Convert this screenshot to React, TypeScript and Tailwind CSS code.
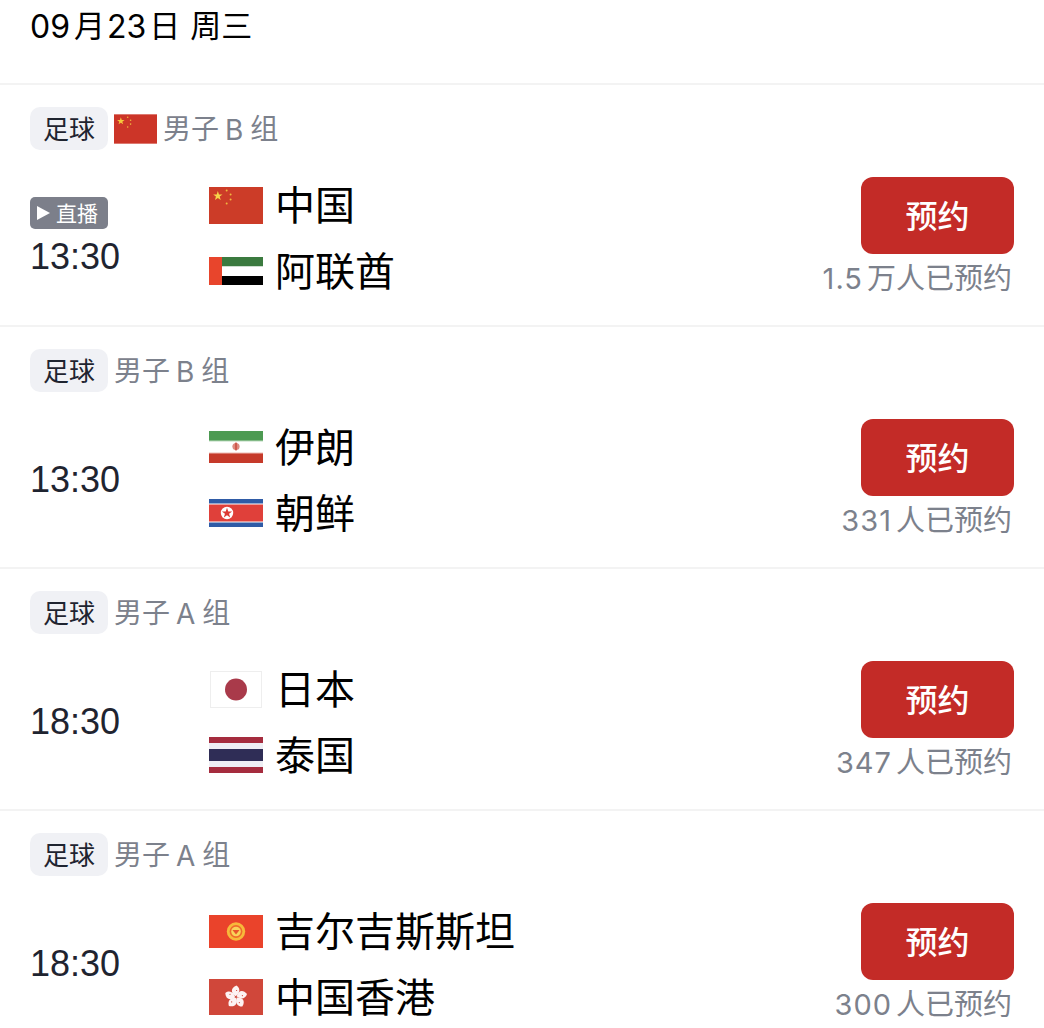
import React from "react"

type FlagProps = { className: string }

const star = "M0,-1 L0.235,-0.325 L0.951,-0.309 L0.38,0.124 L0.588,0.809 L0,0.4 L-0.588,0.809 L-0.38,0.124 L-0.951,-0.309 L-0.235,-0.325 Z"

const China = ({ className }: FlagProps) => (
  <svg viewBox="0 0 55 37" preserveAspectRatio="none" className={className}>
    <rect width="55" height="37" fill="#cc3c28" />
    <path d={star} transform="translate(9 9) scale(5)" fill="#f7d54a" />
    <circle cx="18" cy="3.5" r="1" fill="#f0b93e" />
    <circle cx="22" cy="7.5" r="1" fill="#f0b93e" />
    <circle cx="22" cy="12.5" r="1" fill="#f0b93e" />
    <circle cx="18" cy="16.5" r="1" fill="#f0b93e" />
  </svg>
)

const Uae = ({ className }: FlagProps) => (
  <svg viewBox="0 0 54 28" preserveAspectRatio="none" className={className}>
    <rect width="54" height="9.5" fill="#3b7a3f" />
    <rect y="9.5" width="54" height="9.5" fill="#ffffff" />
    <rect y="19" width="54" height="9" fill="#000000" />
    <rect width="13" height="28" fill="#e8452c" />
  </svg>
)

const Iran = ({ className }: FlagProps) => (
  <svg viewBox="0 0 54 32" preserveAspectRatio="none" className={className}>
    <rect width="54" height="10" fill="#4d9a52" />
    <rect y="10" width="54" height="12" fill="#ffffff" />
    <rect y="22" width="54" height="10" fill="#c63a2a" />
    <rect y="9.5" width="54" height="1" fill="#b9d9bb" />
    <rect y="21.5" width="54" height="1" fill="#eebbb4" />
    <circle cx="27" cy="15.5" r="3.6" fill="#dd8a80" />
    <rect x="26.4" y="11.5" width="1.2" height="8" fill="#c63a2a" />
  </svg>
)

const NorthKorea = ({ className }: FlagProps) => (
  <svg viewBox="0 0 54 28" preserveAspectRatio="none" className={className}>
    <rect width="54" height="28" fill="#2f5ba6" />
    <rect y="4.5" width="54" height="19" fill="#ffffff" />
    <rect y="5.5" width="54" height="17" fill="#e0403a" />
    <circle cx="18" cy="14" r="6.2" fill="#ffffff" />
    <path d={star} transform="translate(18 14.2) scale(5.4)" fill="#dc3a34" />
  </svg>
)

const Japan = ({ className }: FlagProps) => (
  <svg viewBox="0 0 52 37" preserveAspectRatio="none" className={className}>
    <rect x="0.5" y="0.5" width="51" height="36" fill="#ffffff" stroke="#eeeeee" />
    <circle cx="26" cy="18.5" r="11" fill="#a93a4a" />
  </svg>
)

const Thailand = ({ className }: FlagProps) => (
  <svg viewBox="0 0 54 36" preserveAspectRatio="none" className={className}>
    <rect width="54" height="36" fill="#a52c3e" />
    <rect y="6" width="54" height="24" fill="#eeeef4" />
    <rect y="12" width="54" height="12" fill="#2f2d56" />
  </svg>
)

const Kyrgyzstan = ({ className }: FlagProps) => (
  <svg viewBox="0 0 54 33" preserveAspectRatio="none" className={className}>
    <rect width="54" height="33" fill="#ea432b" />
    <circle cx="27" cy="16.5" r="9.2" fill="#f7b93a" />
    <circle cx="27" cy="16.5" r="6.4" fill="#ef6a2c" />
    <circle cx="27" cy="16.5" r="4.8" fill="#f9d35a" />
    <path d="M23.5 15 L30.5 15 L27 19.5 Z" fill="#e8552b" />
  </svg>
)

const HongKong = ({ className }: FlagProps) => (
  <svg viewBox="0 0 54 36" preserveAspectRatio="none" className={className}>
    <rect width="54" height="36" fill="#d0473a" />
    {[0, 72, 144, 216, 288].map((deg) => (
      <g key={deg} transform={`rotate(${deg} 27 18)`}>
        <path d="M26.6 17.2 C21.5 14 21.5 9 27.5 6.6 C31.8 9.5 31 14.5 26.6 17.2 Z" fill="#fdf3f3" />
        <circle cx="27.6" cy="11.5" r="0.6" fill="#d0473a" />
      </g>
    ))}
  </svg>
)

const inter = { fontFamily: 'Inter, "Noto Sans CJK SC", sans-serif' }

const rows = [
  {
    group: "B",
    flag: true,
    live: true,
    time: "13:30",
    num: "1.5",
    unit: "万人已预约",
    teams: [
      { name: "中国", flag: <China className="h-[37px] w-[54px]" /> },
      { name: "阿联酋", flag: <Uae className="h-[28px] w-[54px]" /> },
    ],
  },
  {
    group: "B",
    time: "13:30",
    num: "331",
    unit: "人已预约",
    teams: [
      { name: "伊朗", flag: <Iran className="h-[32px] w-[54px]" /> },
      { name: "朝鲜", flag: <NorthKorea className="h-[28px] w-[54px]" /> },
    ],
  },
  {
    group: "A",
    time: "18:30",
    num: "347",
    unit: "人已预约",
    teams: [
      { name: "日本", flag: <Japan className="h-[37px] w-[52px]" /> },
      { name: "泰国", flag: <Thailand className="h-[36px] w-[54px]" /> },
    ],
  },
  {
    group: "A",
    time: "18:30",
    num: "300",
    unit: "人已预约",
    teams: [
      { name: "吉尔吉斯斯坦", flag: <Kyrgyzstan className="h-[33px] w-[54px]" /> },
      { name: "中国香港", flag: <HongKong className="h-[36px] w-[54px]" /> },
    ],
  },
]

export default function App() {
  return (
    <div
      className="h-[1028px] w-[1044px] overflow-hidden bg-white"
      style={{ fontFamily: '"Liberation Sans", "Noto Sans CJK SC", sans-serif' }}
    >
      <div className="flex h-[83px] items-start pl-[30px] pt-[7px] text-[31px] leading-[40px] text-black">
        <span className="text-[32px]" style={inter}>09</span>
        <span className="ml-[4px]">月</span>
        <span className="ml-[2px] text-[32px]" style={inter}>23</span>
        <span className="ml-[3px]">日</span>
        <span className="ml-[10px]">周三</span>
      </div>
      {rows.map((row, i) => (
        <div key={i} className="border-t-2 border-[#f3f3f3] px-[30px] pt-[22px] pb-[21px]">
          <div className="flex h-[43px] items-center">
            <span className="flex h-[43px] w-[78px] items-center justify-center rounded-[10px] bg-[#f0f1f5] pt-[3px] text-[26px] text-[#1f2430]">
              足球
            </span>
            {row.flag && (
              <svg viewBox="0 0 44 30" className="ml-[6px] h-[30px] w-[43px]">
                <rect width="44" height="30" fill="#cc3528" />
                <path d={star} transform="translate(7 7) scale(4)" fill="#f5c83c" />
                <circle cx="14" cy="3" r="0.8" fill="#f0b93e" />
                <circle cx="17" cy="6" r="0.8" fill="#f0b93e" />
                <circle cx="17" cy="10" r="0.8" fill="#f0b93e" />
                <circle cx="14" cy="13" r="0.8" fill="#f0b93e" />
              </svg>
            )}
            <span className="ml-[6px] flex pt-[2px] text-[28px] text-[#7c818c]">
              男子
              <span className="ml-[6px]" style={inter}>{row.group}</span>
              <span className="ml-[7px]">组</span>
            </span>
          </div>
          <div className="mt-[22px] flex h-[132px]">
            <div className="flex w-[179px] flex-col justify-center">
              {row.live && (
                <span className="mb-[6px] flex h-[32px] w-[78px] items-center gap-[6px] rounded-[5px] bg-[#7c7f8a] pl-[7px] text-[21px] leading-none text-white">
                  <svg viewBox="0 0 13 14" className="h-[14px] w-[13px]">
                    <path d="M0 0 L13 7 L0 14 Z" fill="#ffffff" />
                  </svg>
                  直播
                </span>
              )}
              <span className="text-[36px] leading-[44px] text-[#1f2430]">{row.time}</span>
            </div>
            <div className="flex flex-col">
              {row.teams.map((team) => (
                <div key={team.name} className="flex h-[66px] items-center">
                  <span className="flex w-[54px] justify-center">{team.flag}</span>
                  <span className="ml-[12px] pt-[2px] text-[40px] leading-none text-black">{team.name}</span>
                </div>
              ))}
            </div>
            <div className="ml-auto flex flex-col items-end pt-[5px]">
              <button className="flex h-[77px] w-[153px] items-center justify-center rounded-[12px] bg-[#c32b27] pt-[2px] text-[32px] font-medium text-white">
                预约
              </button>
              <span className="mt-[7px] flex pr-[2px] text-[29px] leading-[36px] text-[#7c818c]">
                <span className="tracking-[1px]" style={inter}>{row.num}</span>
                <span className="ml-[4px]">{row.unit}</span>
              </span>
            </div>
          </div>
        </div>
      ))}
    </div>
  )
}
